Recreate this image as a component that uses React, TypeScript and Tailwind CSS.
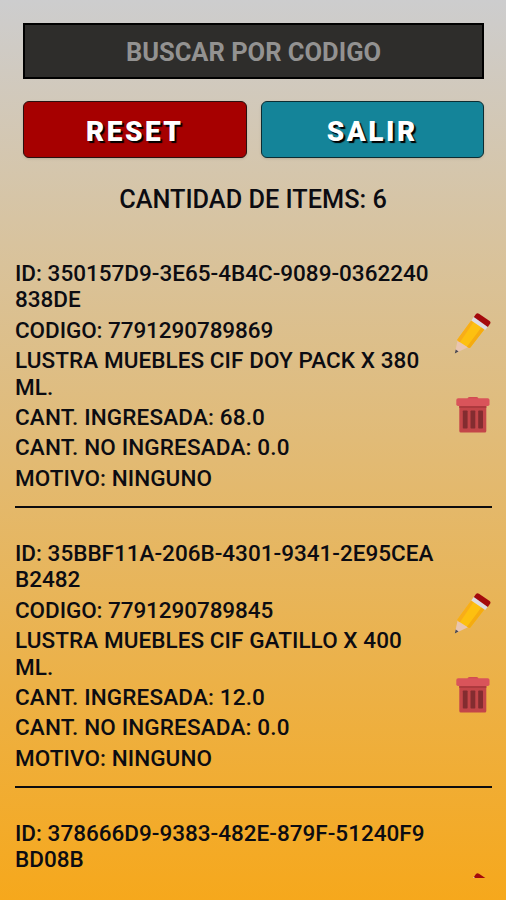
interface Item {
    id: string;
    codigo: string;
    descripcion: string;
    ingresada: string;
    noIngresada: string;
    motivo: string;
}

const items: Item[] = [
    {
        id: '350157D9-3E65-4B4C-9089-0362240838DE',
        codigo: '7791290789869',
        descripcion: 'LUSTRA MUEBLES CIF DOY PACK X 380 ML.',
        ingresada: '68.0',
        noIngresada: '0.0',
        motivo: 'NINGUNO',
    },
    {
        id: '35BBF11A-206B-4301-9341-2E95CEAB2482',
        codigo: '7791290789845',
        descripcion: 'LUSTRA MUEBLES CIF GATILLO X 400 ML.',
        ingresada: '12.0',
        noIngresada: '0.0',
        motivo: 'NINGUNO',
    },
    {
        id: '378666D9-9383-482E-879F-51240F9BD08B',
        codigo: '',
        descripcion: '',
        ingresada: '',
        noIngresada: '',
        motivo: '',
    },
];

function PencilIcon() {
    return (
        <svg width="37" height="42" viewBox="0 0 37 42">
            <path d="M3.8 26.5 L0.8 40.4 L14.5 34 Z" fill="#e8c5b0" />
            <path d="M1.7 36.6 L0.8 40.4 L4.6 38.6 Z" fill="#4b4a50" />
            <path d="M3.5 26.3 L18.2 6.3 L31.2 15.2 L16.4 34.6 Q15.4 35.4 14.2 34.5 L4 28 Q3 27.3 3.5 26.3 Z" fill="#fdc010" />
            <path d="M3.5 26.3 L18.2 6.3 L20.4 7.8 L6 29.2 L4 28 Q3 27.3 3.5 26.3 Z" fill="#f8ad18" />
            <path d="M12.9 33.7 L28.2 13.2 L31.2 15.2 L16.4 34.6 Q15.4 35.4 14.2 34.5 Z" fill="#f5ab10" />
            <path d="M17.2 7.4 L20.2 3.4 L34 13.4 L31.2 17 Z" fill="#dddce2" />
            <path d="M19.8 4 L22 1 Q23.2 -0.5 25 0.7 L35.6 7.9 Q37 9 36.2 10.5 L33.8 13.9 Z" fill="#a40a0c" />
        </svg>
    );
}

function TrashIcon() {
    return (
        <svg width="34" height="36" viewBox="0 0 34 36">
            <path d="M3.3 8 H30.3 V34 Q30.3 35.5 28.8 35.5 H4.8 Q3.3 35.5 3.3 34 Z" fill="#c34549" />
            <rect x="3.3" y="8" width="27" height="3" fill="#ad3a3e" />
            <rect x="6.8" y="13.5" width="4.8" height="18" rx="0.8" fill="#832c30" />
            <rect x="14.5" y="13.5" width="4.8" height="18" rx="0.8" fill="#832c30" />
            <rect x="22.2" y="13.5" width="4.8" height="18" rx="0.8" fill="#832c30" />
            <path d="M11.5 2 Q11.5 0 13.5 0 H20.5 Q22.5 0 22.5 2 Z" fill="#d24b52" />
            <rect x="0.3" y="1.3" width="33.2" height="7.7" rx="1.8" fill="#d9545a" />
        </svg>
    );
}

function ItemRow({ item }: { item: Item }) {
    return (
        <div className="flex h-[280px] shrink-0 items-center justify-between border-b-2 border-[#0c0c0e] pt-[17px]">
            <div className="flex h-[232px] w-[423px] flex-col gap-[3.5px] text-[22.5px] leading-[26.8px] font-medium tracking-[0.15px]">
                <p className="tracking-normal break-all">ID: {item.id}</p>
                <p className="tracking-[-0.08px]">CODIGO: {item.codigo}</p>
                <p className="tracking-[0.07px]">{item.descripcion}</p>
                <p>CANT. INGRESADA: {item.ingresada}</p>
                <p>CANT. NO INGRESADA: {item.noIngresada}</p>
                <p className="tracking-[0.07px]">MOTIVO: {item.motivo}</p>
            </div>
            <div className="flex flex-col items-center gap-[42px] pr-px pb-[6px]">
                <button aria-label="Editar">
                    <PencilIcon />
                </button>
                <button aria-label="Eliminar">
                    <TrashIcon />
                </button>
            </div>
        </div>
    );
}

export default function App() {
    return (
        <div className="flex h-[900px] w-[506px] flex-col overflow-hidden bg-linear-to-b/srgb from-[#cdcdce] to-[#f6a81c] font-['Roboto',sans-serif] text-[#0c0c12]">
            {/* Buscador y botones */}
            <div className="flex flex-col gap-[22px] pt-[23px] pr-[22px] pl-[23px]">
                <input
                    type="text"
                    placeholder="BUSCAR POR CODIGO"
                    className="h-14 w-full border-2 border-black bg-[#2e2d2b] pt-[2px] text-center text-[25.5px] font-bold placeholder:text-[#939291] placeholder:opacity-100"
                />
                <div className="grid h-[57px] grid-cols-2 gap-[14px] text-[28px] font-black tracking-[2.5px] text-white">
                    <button className="rounded-md border border-[#2a1010] bg-[#a60000] pt-[5px] shadow-sm [text-shadow:2px_2px_1px_#000]">
                        RESET
                    </button>
                    <button className="rounded-md border border-[#0c2d33] bg-[#148499] pt-[5px] shadow-sm [text-shadow:2px_2px_1px_#000]">
                        SALIR
                    </button>
                </div>
            </div>

            <h2 className="mt-[27px] text-center text-[25.3px] leading-[30px] font-medium">CANTIDAD DE ITEMS: 6</h2>

            {/* Listado */}
            <div className="mr-[14px] ml-[15px] mt-[13px] mb-[22px] flex min-h-0 flex-1 flex-col overflow-hidden">
                {items.map((item) => (
                    <ItemRow key={item.id} item={item} />
                ))}
            </div>
        </div>
    );
}
